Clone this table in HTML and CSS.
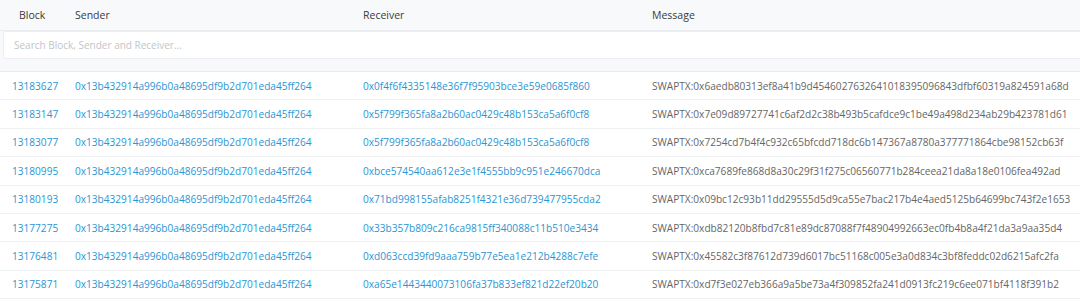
FILE: index.html
```html
<!DOCTYPE html>
<html lang="en">
<head>
    <meta charset="UTF-8">
    <meta name="viewport" content="width=device-width, initial-scale=1.0">
    <title>Swap Messages</title>
    <link rel="stylesheet" href="styles.css">
</head>
<body>
    <div class="tx-table">
        <!-- Column headers -->
        <div class="tx-head">
            <div class="col col-block">Block</div>
            <div class="col">Sender</div>
            <div class="col">Receiver</div>
            <div class="col">Message</div>
        </div>

        <!-- Search -->
        <div class="search-row">
            <input type="text" class="search-input" placeholder="Search Block, Sender and Receiver...">
        </div>

        <!-- Rows -->
        <div class="tx-body">
            <div class="tx-row">
                <a class="col" href="#">13183627</a>
                <a class="col" href="#">0x13b432914a996b0a48695df9b2d701eda45ff264</a>
                <a class="col" href="#">0x0f4f6f4335148e36f7f95903bce3e59e0685f860</a>
                <div class="col msg">SWAPTX:0x6aedb80313ef8a41b9d4546027632641018395096843dfbf60319a824591a68d</div>
            </div>
            <div class="tx-row">
                <a class="col" href="#">13183147</a>
                <a class="col" href="#">0x13b432914a996b0a48695df9b2d701eda45ff264</a>
                <a class="col" href="#">0x5f799f365fa8a2b60ac0429c48b153ca5a6f0cf8</a>
                <div class="col msg">SWAPTX:0x7e09d89727741c6af2d2c38b493b5cafdce9c1be49a498d234ab29b423781d61</div>
            </div>
            <div class="tx-row">
                <a class="col" href="#">13183077</a>
                <a class="col" href="#">0x13b432914a996b0a48695df9b2d701eda45ff264</a>
                <a class="col" href="#">0x5f799f365fa8a2b60ac0429c48b153ca5a6f0cf8</a>
                <div class="col msg">SWAPTX:0x7254cd7b4f4c932c65bfcdd718dc6b147367a8780a377771864cbe98152cb63f</div>
            </div>
            <div class="tx-row">
                <a class="col" href="#">13180995</a>
                <a class="col" href="#">0x13b432914a996b0a48695df9b2d701eda45ff264</a>
                <a class="col" href="#">0xbce574540aa612e3e1f4555bb9c951e246670dca</a>
                <div class="col msg">SWAPTX:0xca7689fe868d8a30c29f31f275c06560771b284ceea21da8a18e0106fea492ad</div>
            </div>
            <div class="tx-row">
                <a class="col" href="#">13180193</a>
                <a class="col" href="#">0x13b432914a996b0a48695df9b2d701eda45ff264</a>
                <a class="col" href="#">0x71bd998155afab8251f4321e36d739477955cda2</a>
                <div class="col msg">SWAPTX:0x09bc12c93b11dd29555d5d9ca55e7bac217b4e4aed5125b64699bc743f2e1653</div>
            </div>
            <div class="tx-row">
                <a class="col" href="#">13177275</a>
                <a class="col" href="#">0x13b432914a996b0a48695df9b2d701eda45ff264</a>
                <a class="col" href="#">0x33b357b809c216ca9815ff340088c11b510e3434</a>
                <div class="col msg">SWAPTX:0xdb82120b8fbd7c81e89dc87088f7f48904992663ec0fb4b8a4f21da3a9aa35d4</div>
            </div>
            <div class="tx-row">
                <a class="col" href="#">13176481</a>
                <a class="col" href="#">0x13b432914a996b0a48695df9b2d701eda45ff264</a>
                <a class="col" href="#">0xd063ccd39fd9aaa759b77e5ea1e212b4288c7efe</a>
                <div class="col msg">SWAPTX:0x45582c3f87612d739d6017bc51168c005e3a0d834c3bf8feddc02d6215afc2fa</div>
            </div>
            <div class="tx-row">
                <a class="col" href="#">13175871</a>
                <a class="col" href="#">0x13b432914a996b0a48695df9b2d701eda45ff264</a>
                <a class="col" href="#">0xa65e1443440073106fa37b833ef821d22ef20b20</a>
                <div class="col msg">SWAPTX:0xd7f3e027eb366a9a5be73a4f309852fa241d0913fc219c6ee071bf4118f391b2</div>
            </div>
        </div>
    </div>
</body>
</html>
```

FILE: styles.css
```css
body {
    margin: 0;
    font-family: "Open Sans", Arial, sans-serif;
    background-color: #fff;
    overflow: hidden;
}

.tx-table {
    width: 1080px;
}

.tx-head,
.tx-row {
    display: grid;
    grid-template-columns: 63px 288px 289px 1fr;
    align-items: center;
}

.col {
    padding-left: 12px;
    white-space: nowrap;
}

/* Header */
.tx-head {
    height: 30px;
    background-color: #f8f9fb;
    border-bottom: 1px solid #e9edf0;
    font-size: 10.5px;
    color: #3a3a3a;
}

.tx-head .col-block {
    padding-left: 19px;
}

/* Search Section */
.search-row {
    background-color: #f8f9fb;
    padding: 0 0 12px 3px;
    border-bottom: 1px solid #e9edf0;
}

.search-input {
    display: block;
    box-sizing: border-box;
    width: 1090px;
    height: 28px;
    padding: 0 10px;
    border: 1px solid #eceef1;
    border-radius: 2px;
    background-color: #fff;
    font-family: inherit;
    font-size: 10px;
    outline: none;
}

.search-input::placeholder {
    color: #c2c5c8;
}

/* Rows */
.tx-row {
    height: 28.4px;
    border-bottom: 1px solid #eef0f2;
    font-size: 10.1px;
    box-sizing: border-box;
}

.tx-row a {
    color: #2b95d3;
    text-decoration: none;
}

.tx-row .msg {
    color: #666;
}
```
